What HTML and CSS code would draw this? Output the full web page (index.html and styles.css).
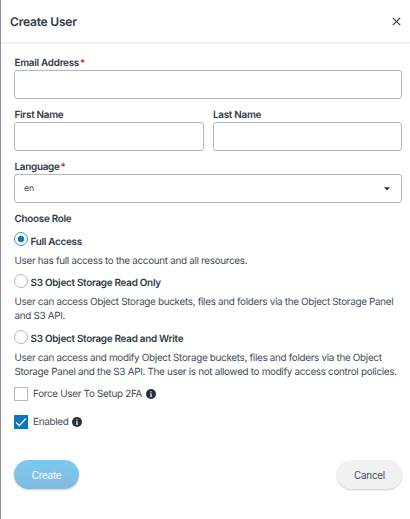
FILE: index.html
```html
<!DOCTYPE html>
<html lang="en">
<head>
<meta charset="utf-8">
<title>Create User</title>
<link rel="stylesheet" href="styles.css">
</head>
<body>
<section class="drawer">
  <header class="header">
    <h1>Create User</h1>
    <svg class="close" viewBox="0 0 9 9"><path d="M.8.8l7.4 7.4M8.2.8L.8 8.2"/></svg>
  </header>
  <form class="form">
    <div class="field"><label for="email">Email Address<span class="req">*</span></label><input id="email" class="control"></div>
    <div class="row">
      <div class="field"><label for="first">First Name</label><input id="first" class="control"></div>
      <div class="field"><label for="last">Last Name</label><input id="last" class="control"></div>
    </div>
    <div class="field">
      <label>Language<span class="req">*</span></label>
      <div class="control select"><span>en</span><svg class="caret" viewBox="0 0 6 4"><path d="M0 .3h6L3 3.5z"/></svg></div>
    </div>
    <div class="role-title">Choose Role</div>
    <div class="role">
      <div class="role-head"><i class="radio on"></i><b>Full Access</b></div>
      <p>User has full access to the account and all resources.</p>
    </div>
    <div class="role">
      <div class="role-head"><i class="radio"></i><b>S3 Object Storage Read Only</b></div>
      <p>User can access Object Storage buckets, files and folders via the Object Storage Panel<br>and S3 API.</p>
    </div>
    <div class="role">
      <div class="role-head"><i class="radio"></i><b>S3 Object Storage Read and Write</b></div>
      <p>User can access and modify Object Storage buckets, files and folders via the Object<br>Storage Panel and the S3 API. The user is not allowed to modify access control policies.</p>
    </div>
    <div class="check-row first">
      <span class="box"></span><span class="check-text">Force User To Setup 2FA</span>
      <svg class="info" viewBox="0 0 10 10"><circle cx="5" cy="5" r="5"/><path d="M4.4 2.2h1.2v1.1H4.4zM4.2 4.2h1.4v2.7h.4v.8H4v-.8h.4V5h-.2z"/></svg>
    </div>
    <div class="check-row">
      <span class="box on"><svg viewBox="0 0 14 14"><path d="M2.2 7.4l3.2 3.2 6.4-7"/></svg></span><span class="check-text">Enabled</span>
      <svg class="info" viewBox="0 0 10 10"><circle cx="5" cy="5" r="5"/><path d="M4.4 2.2h1.2v1.1H4.4zM4.2 4.2h1.4v2.7h.4v.8H4v-.8h.4V5h-.2z"/></svg>
    </div>
    <div class="actions">
      <button type="button" class="btn create">Create</button>
      <button type="button" class="btn cancel">Cancel</button>
    </div>
  </form>
</section>
</body>
</html>
```
FILE: styles.css
```css
* { box-sizing: border-box; }
body {
  margin: 0;
  background: #fff;
  color: #414d5a;
  font: 9.9px/14px Inter, "Liberation Sans", sans-serif;
  letter-spacing: -.31px;
  text-rendering: geometricPrecision;
}
.drawer { height: 519px; border-left: 1px solid #929292; overflow: hidden; }
.header {
  height: 42px;
  padding: 2px 9px 0 9px;
  display: flex;
  align-items: center;
  justify-content: space-between;
  box-shadow: 0 1px 2px rgba(0, 0, 0, .11);
}
h1 { margin: 0; font-size: 12px; font-weight: 600; letter-spacing: -.2px; color: #2e3a47; }
.close { width: 9px; height: 9px; margin-top: -1px; fill: none; stroke: #36414d; stroke-width: 1.2; }
.form { padding: 13px 8px 0 13px; }
.field { height: 52px; flex: 1; }
.field label, .role-title, .role-head b {
  font-weight: 600;
  letter-spacing: -.27px;
  color: #303b47;
}
.field label { display: block; height: 15px; padding-left: .5px; line-height: 16px; }
.field .req { color: #e01b1b; margin-left: 1px; }
.control {
  display: block;
  width: 100%;
  height: 29px;
  border: 1px solid #b4b7bb;
  border-radius: 3px;
  background: #fff;
}
.row { display: flex; gap: 9px; }
.select {
  display: flex;
  align-items: center;
  justify-content: space-between;
  padding: 1px 11px 0 9px;
  font-size: 8.7px;
  letter-spacing: 0;
}
.caret { width: 6px; height: 4px; margin-top: -1px; fill: #26313c; }
.role-title { height: 21px; padding-left: .5px; line-height: 16px; }
.role-head { display: flex; height: 14px; }
.role-head b { margin: 1.6px 0 0 2.5px; line-height: 16px; }
.radio { width: 14px; height: 14px; border: 1px solid #b4b7bb; border-radius: 50%; }
.radio.on {
  border-color: #3b93d2;
  background: radial-gradient(circle, #0d76c4 2.9px, #fff 3.6px);
}
.role { padding-bottom: .3px; }
.role p { margin: 0; padding: 7.5px 0 6px .5px; white-space: nowrap; }
.check-row { height: 14px; margin-bottom: 14px; display: flex; align-items: center; }
.check-row.first { margin-top: 1.6px; }
.box { width: 14px; height: 14px; border: 1px solid #b4b7bb; }
.box.on { border: 0; background: #0d76c4; }
.box svg { display: block; fill: none; stroke: #fff; stroke-width: 1.4; }
.check-text { margin: 0 3.5px 0 5px; letter-spacing: -.3px; }
.info { width: 10px; height: 10px; fill: #26313c; }
.info path { fill: #fff; }
.actions { margin-top: 31.5px; display: flex; justify-content: space-between; }
.btn {
  width: 65px;
  height: 29px;
  padding: 0;
  border: 0;
  border-radius: 15px;
  font: inherit;
  letter-spacing: -.25px;
  box-shadow: 0 1px 2px rgba(0, 0, 0, .2);
}
.create { color: #fff; background: linear-gradient(#7cc9f1, #83b8de); }
.cancel { color: #414d5a; background: #f0f1f1; }
```
